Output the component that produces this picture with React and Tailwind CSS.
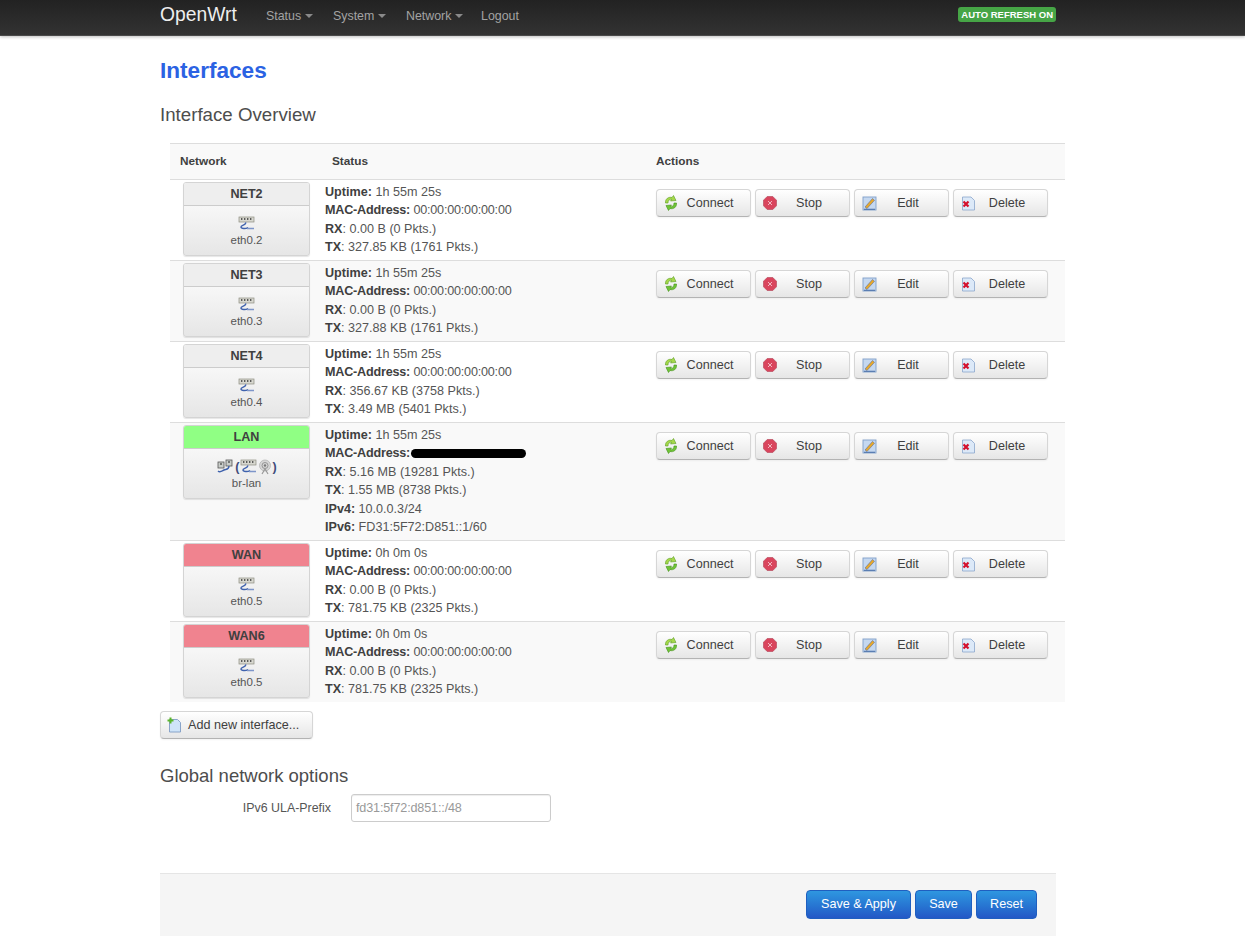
const interfaces = [
  { name: 'NET2', head: 'bg-[#eeeeee]', dev: 'eth0.2', uptime: '1h 55m 25s', mac: '00:00:00:00:00:00', rx: '0.00 B (0 Pkts.)', tx: '327.85 KB (1761 Pkts.)' },
  { name: 'NET3', head: 'bg-[#eeeeee]', dev: 'eth0.3', uptime: '1h 55m 25s', mac: '00:00:00:00:00:00', rx: '0.00 B (0 Pkts.)', tx: '327.88 KB (1761 Pkts.)' },
  { name: 'NET4', head: 'bg-[#eeeeee]', dev: 'eth0.4', uptime: '1h 55m 25s', mac: '00:00:00:00:00:00', rx: '356.67 KB (3758 Pkts.)', tx: '3.49 MB (5401 Pkts.)' },
  { name: 'LAN', head: 'bg-[#90ff84]', dev: 'br-lan', bridge: true, uptime: '1h 55m 25s', rx: '5.16 MB (19281 Pkts.)', tx: '1.55 MB (8738 Pkts.)', ipv4: '10.0.0.3/24', ipv6: 'FD31:5F72:D851::1/60' },
  { name: 'WAN', head: 'bg-[#f0838f]', dev: 'eth0.5', uptime: '0h 0m 0s', mac: '00:00:00:00:00:00', rx: '0.00 B (0 Pkts.)', tx: '781.75 KB (2325 Pkts.)' },
  { name: 'WAN6', head: 'bg-[#f0838f]', dev: 'eth0.5', uptime: '0h 0m 0s', mac: '00:00:00:00:00:00', rx: '0.00 B (0 Pkts.)', tx: '781.75 KB (2325 Pkts.)' },
]

function Caret() {
  return <span className="ml-[4px] inline-block w-0 h-0 border-x-[4px] border-x-transparent border-t-[4px] border-t-[#8a8a8a] align-middle" />
}

function EthIcon() {
  return (
    <svg width="17" height="16" viewBox="0 0 17 16" className="shrink-0">
      <rect x="1" y="1" width="15" height="5" fill="#d8d8d0" stroke="#8e8e80" strokeWidth="0.7" />
      <path d="M3 3h1.4M6 3h1.4M9 3h1.4M12 3h1.4" stroke="#333333" strokeWidth="1.6" />
      <path d="M8 6.500C7 10 3 9 3 11c0 2 5 2 7 .5" fill="none" stroke="#3f62ad" strokeWidth="1.4" />
      <path d="M9 12.500h7" stroke="#7d95c9" strokeWidth="1.3" />
    </svg>
  )
}

function BridgeIcon() {
  return (
    <svg width="17" height="16" viewBox="0 0 17 16" className="shrink-0">
      <rect x="2" y="3" width="6" height="6" fill="#c9cdc9" stroke="#555555" strokeWidth="0.8" />
      <rect x="10" y="1" width="6" height="6" fill="#c9cdc9" stroke="#555555" strokeWidth="0.8" />
      <path d="M4 5h2M12 3h2" stroke="#222222" strokeWidth="1.2" />
      <path d="M13 7c0 4-3 3-5 4s-4 3-6 1" fill="none" stroke="#3f62ad" strokeWidth="1.4" />
    </svg>
  )
}

function WifiIcon() {
  return (
    <svg width="16" height="16" viewBox="0 0 16 16" className="shrink-0">
      <circle cx="8" cy="6.500" r="5.500" fill="#d6d6d6" stroke="#b5b5b5" strokeWidth="0.8" />
      <circle cx="8" cy="6.500" r="3" fill="none" stroke="#8d8d8d" strokeWidth="0.9" />
      <circle cx="8" cy="6.500" r="1.200" fill="#777777" />
      <path d="M5 15l3-5 3 5" fill="none" stroke="#999999" strokeWidth="1.200" />
    </svg>
  )
}

function ConnectIcon() {
  return (
    <svg width="14" height="16" viewBox="0 0 14 16" className="shrink-0">
      <path d="M1.500 8c-.5-4 3-6.500 6.500-5.500l1.500-2 2.500 5-5.500.5 1.200-1.700C5.500 3.800 4 5.500 4 8z" fill="#a5d84a" stroke="#5a9e22" strokeWidth="0.6" />
      <path d="M12.500 8c.5 4-3 6.500-6.500 5.500l-1.500 2-2.500-5 5.500-.5-1.200 1.700c2.200.5 3.700-1.200 3.700-3.700z" fill="#6fc436" stroke="#45901c" strokeWidth="0.6" />
    </svg>
  )
}

function StopIcon() {
  return (
    <svg width="14" height="14" viewBox="0 0 14 14" className="shrink-0">
      <path d="M4.200 .5h5.600l3.700 3.700v5.600l-3.700 3.700H4.200L.5 9.800V4.200z" fill="#d9455d" stroke="#b04255" strokeWidth="0.6" />
      <path d="M5 5l4 4M9 5l-4 4" stroke="#f5c6cf" strokeWidth="0.9" />
    </svg>
  )
}

function EditIcon() {
  return (
    <svg width="15" height="15" viewBox="0 0 15 15" className="shrink-0">
      <rect x="1" y="1" width="13" height="13" fill="#c5d8f0" stroke="#7f9fc9" strokeWidth="0.9" />
      <path d="M3 11L10.500 2.500l2 1.800L5 12.500z" fill="#e7a92c" stroke="#4a5f96" strokeWidth="0.5" />
      <path d="M2 13.300h11" stroke="#4e73aa" strokeWidth="1.100" />
    </svg>
  )
}

function DeleteIcon() {
  return (
    <svg width="15" height="15" viewBox="0 0 15 15" className="shrink-0">
      <path d="M1.500 1h8.500l3.500 3.500V14h-12z" fill="#dce9f8" stroke="#8aa6cc" strokeWidth="0.8" />
      <path d="M2.500 5.500l5 5M7.500 5.500l-5 5" stroke="#d40f2c" strokeWidth="2.200" />
    </svg>
  )
}

function AddIcon() {
  return (
    <svg width="15" height="16" viewBox="0 0 15 16" className="shrink-0">
      <path d="M2.500 2.500h8l3 3v9.500h-11z" fill="#cfe4f8" stroke="#7f9cc4" strokeWidth="0.9" />
      <path d="M3.500 .5v6M.5 3.500h6" stroke="#5ab52a" strokeWidth="2" />
    </svg>
  )
}

function ActionButton({ icon, label }) {
  return (
    <button className="flex items-center w-[95px] h-[28px] pl-[7px] pr-[11px] rounded-[4px] border border-[#d6d6d6] border-b-[#b3b3b3] bg-gradient-to-b from-white to-[#e6e6e6] shadow-[0_1px_2px_rgba(0,0,0,0.05)] text-[#404040]">
      <span className="w-[17px] flex justify-start shrink-0">{icon}</span>
      <span className="flex-1 text-center">{label}</span>
    </button>
  )
}

function NetworkBox({ row }) {
  return (
    <div className="w-[127px] h-[74px] rounded-[3px] border border-[#d4d4d4] overflow-hidden bg-gradient-to-b from-white to-[#e6e6e6] shadow-[0_1px_1px_rgba(0,0,0,0.1)]">
      <div className={`${row.head} h-[23px] border-b border-[#cccccc] flex items-center justify-center font-bold text-[#404040] text-[12.6px]`}>{row.name}</div>
      <div className="flex flex-col items-center pt-[10px] text-[11.5px] text-[#555555]">
        <div className="flex items-center h-[16px] text-[#3f4c7a]">
          {row.bridge ? (
            <>
              <BridgeIcon />
              <span className="ml-[2px] text-[12.6px] font-bold">(</span>
              <EthIcon />
              <WifiIcon />
              <span className="text-[12.6px] font-bold">)</span>
            </>
          ) : <EthIcon />}
        </div>
        <div className="-mt-[1px] leading-[18px]">{row.dev}</div>
      </div>
    </div>
  )
}

function StatusLine({ label, tight, children }) {
  return (
    <div className={`h-[18.4px] leading-[18.4px] whitespace-nowrap ${tight ? 'tracking-[-0.2px]' : ''}`}>
      <b className="font-bold text-[#404040]">{label}</b>{children}
    </div>
  )
}

function Row({ row, odd }) {
  return (
    <div className={`flex border-t border-[#dddddd] ${row.bridge ? 'h-[118px]' : 'h-[81px]'} ${odd ? 'bg-[#f9f9f9]' : 'bg-white'}`}>
      <div className="w-[155px] pl-[13px] pt-[2px] shrink-0"><NetworkBox row={row} /></div>
      <div className="w-[331px] pt-[3px] shrink-0 text-[#555555]">
        <StatusLine label="Uptime:"> {row.uptime}</StatusLine>
        {row.mac ? (
          <StatusLine label="MAC-Address:" tight> {row.mac}</StatusLine>
        ) : (
          <div className="h-[18.4px] leading-[18.4px] flex items-center tracking-[-0.2px]">
            <b className="font-bold text-[#404040]">MAC-Address:</b>
            <span className="ml-[1px] w-[115px] h-[9px] rounded-full bg-black" />
          </div>
        )}
        <StatusLine label="RX">: {row.rx}</StatusLine>
        <StatusLine label="TX">: {row.tx}</StatusLine>
        {row.ipv4 && <StatusLine label="IPv4:"> {row.ipv4}</StatusLine>}
        {row.ipv6 && <StatusLine label="IPv6:"> {row.ipv6}</StatusLine>}
      </div>
      <div className="flex gap-[4px] pt-[9px] items-start">
        <ActionButton icon={<ConnectIcon />} label="Connect" />
        <ActionButton icon={<StopIcon />} label="Stop" />
        <ActionButton icon={<EditIcon />} label="Edit" />
        <ActionButton icon={<DeleteIcon />} label="Delete" />
      </div>
    </div>
  )
}

function BlueButton({ label, width }) {
  return (
    <button className={`${width} h-[29px] rounded-[4px] border border-[#1f5fc0] bg-gradient-to-b from-[#2f97e0] to-[#2458c6] text-white text-[12.6px]`}>{label}</button>
  )
}

export default function App() {
  return (
    <div className="bg-white min-h-[952px] text-[12.6px] text-[#404040] font-['Liberation_Sans',Arial,sans-serif]">
      <div className="h-[36px] bg-gradient-to-b from-[#222222] to-[#333333] border-b border-[#4a4a4a] shadow-[0_1px_3px_rgba(0,0,0,0.25)]">
        <div className="ml-[160px] w-[896px] h-full flex items-center">
          <div className="w-[106px] text-[19.3px] text-[#eeeeee] -mt-[5px]">OpenWrt</div>
          <div className="flex text-[#a3a3a3] text-[12.4px] -mt-[3px]">
            <span className="w-[67px]">Status<Caret /></span>
            <span className="w-[73px]">System<Caret /></span>
            <span className="w-[75px]">Network<Caret /></span>
            <span>Logout</span>
          </div>
          <span className="ml-auto h-[15px] px-[3px] rounded-[3px] bg-[#46a546] text-white text-[9.5px] font-bold leading-[15px] -mt-[6px]">AUTO REFRESH ON</span>
        </div>
      </div>

      <div className="ml-[160px] w-[896px]">
        <h2 className="mt-[20px] text-[22.6px] leading-[30px] font-bold text-[#2b62e3]">Interfaces</h2>
        <h3 className="mt-[14px] text-[18.7px] leading-[30px] text-[#4d4d4d]">Interface Overview</h3>

        <div className="ml-[10px] w-[895px] mt-[13px]">
          <div className="flex h-[36px] items-center border-t border-[#dddddd] bg-[#f9f9f9] font-bold text-[11.8px]">
            <div className="w-[162px] pl-[10px]">Network</div>
            <div className="w-[324px]">Status</div>
            <div>Actions</div>
          </div>
          {interfaces.map((row, i) => <Row key={row.name} row={row} odd={i % 2 === 1} />)}
        </div>

        <button className="mt-[9px] flex items-center w-[153px] h-[28px] pl-[6px] rounded-[4px] border border-[#d6d6d6] border-b-[#b3b3b3] bg-gradient-to-b from-white to-[#e6e6e6] shadow-[0_1px_2px_rgba(0,0,0,0.05)] text-[#404040]">
          <AddIcon />
          <span className="ml-[6px]">Add new interface...</span>
        </button>

        <h3 className="mt-[22px] text-[18.5px] leading-[30px] text-[#4d4d4d]">Global network options</h3>
        <div className="mt-[3px] flex items-center">
          <label className="w-[171px] text-right text-[#555555] text-[12.4px]">IPv6 ULA-Prefix</label>
          <div className="ml-[20px] w-[200px] h-[28px] px-[4px] flex items-center rounded-[3px] border border-[#cccccc] bg-white text-[#999999] tracking-[-0.15px] shadow-[inset_0_1px_1px_rgba(0,0,0,0.075)]">fd31:5f72:d851::/48</div>
        </div>

        <div className="mt-[51px] h-[63px] border-t border-[#e5e5e5] bg-[#f5f5f5] flex justify-end gap-[4px] pt-[16px] pr-[19px]">
          <BlueButton label="Save & Apply" width="w-[105px]" />
          <BlueButton label="Save" width="w-[57px]" />
          <BlueButton label="Reset" width="w-[61px]" />
        </div>
      </div>
    </div>
  )
}
